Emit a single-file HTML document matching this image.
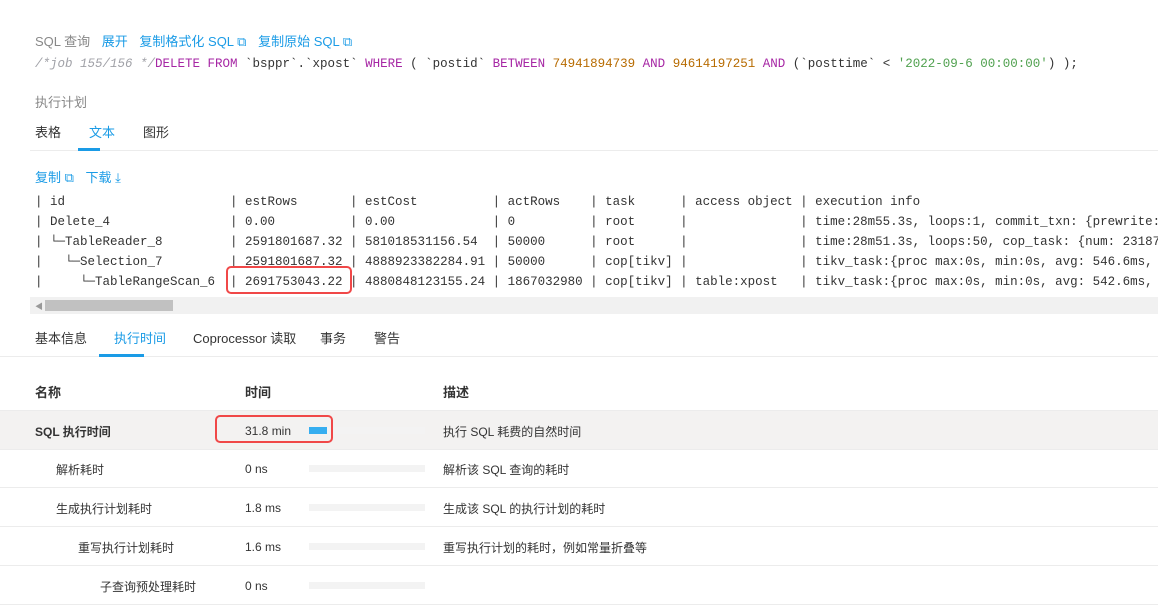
<!DOCTYPE html>
<html><head><meta charset="utf-8"><style>
body{margin:0;width:1158px;height:598px;overflow:hidden;background:#fff;font-family:"Liberation Sans","Noto Sans CJK SC",sans-serif;position:relative;color:#333}
.a{position:absolute;white-space:nowrap}
.blue{color:#1a9be6}
.mono{font-family:"Liberation Mono","DejaVu Sans Mono",monospace;font-size:12.5px}
pre{margin:0;position:absolute;left:35px;top:192px;font-family:"Liberation Mono","DejaVu Sans Mono",monospace;font-size:12.5px;line-height:20px;color:#333}
.kw{color:#a626a4}.num{color:#b76b01}.str{color:#50a14f}.cm{color:#a0a1a7;font-style:italic}
.row{position:absolute;left:0;width:1158px;height:38px;border-bottom:1px solid #ececec;font-size:12px}
.row span{position:absolute;top:12px}
.track{position:absolute;left:309px;top:16px;width:116px;height:7px;background:#f3f3f3}
</style></head><body>
<div class="a" style="left:35px;top:31px;font-size:13px;color:#888">SQL 查询 <span class="blue" style="margin-left:8px">展开</span> <span class="blue" style="margin-left:8px">复制格式化 SQL ⧉</span> <span class="blue" style="margin-left:8px">复制原始 SQL ⧉</span></div>
<div class="a mono" style="left:35px;top:57px"><span class="cm">/*job 155/156 */</span><span class="kw">DELETE FROM</span> `bsppr`.`xpost` <span class="kw">WHERE</span> ( `postid` <span class="kw">BETWEEN</span> <span class="num">74941894739</span> <span class="kw">AND</span> <span class="num">94614197251</span> <span class="kw">AND</span> (`posttime` &lt; <span class="str">'2022-09-6 00:00:00'</span>) );</div>
<div class="a" style="left:35px;top:92px;font-size:13px;color:#888">执行计划</div>
<div class="a" style="left:35px;top:122px;font-size:13px;color:#333">表格</div>
<div class="a blue" style="left:89px;top:122px;font-size:13px">文本</div>
<div class="a" style="left:143px;top:122px;font-size:13px;color:#333">图形</div>
<div class="a" style="left:30px;top:150px;width:1128px;height:1px;background:#ececec"></div>
<div class="a" style="left:78px;top:148px;width:22px;height:3px;background:#1a9be6"></div>
<div class="a blue" style="left:35px;top:167px;font-size:13px">复制 ⧉ <span style="margin-left:8px">下载 ⤓</span></div>
<pre>| id                      | estRows       | estCost          | actRows    | task      | access object | execution info
| Delete_4                | 0.00          | 0.00             | 0          | root      |               | time:28m55.3s, loops:1, commit_txn: {prewrite:
| └─TableReader_8         | 2591801687.32 | 581018531156.54  | 50000      | root      |               | time:28m51.3s, loops:50, cop_task: {num: 23187
|   └─Selection_7         | 2591801687.32 | 4888923382284.91 | 50000      | cop[tikv] |               | tikv_task:{proc max:0s, min:0s, avg: 546.6ms,
|     └─TableRangeScan_6  | 2691753043.22 | 4880848123155.24 | 1867032980 | cop[tikv] | table:xpost   | tikv_task:{proc max:0s, min:0s, avg: 542.6ms,</pre>
<div class="a" style="left:226px;top:266px;width:122px;height:24px;border:2.5px solid #f04848;border-radius:5px"></div>
<div class="a" style="left:30px;top:297px;width:1128px;height:17px;background:#f1f1f1"></div>
<div class="a" style="left:45px;top:300px;width:128px;height:11px;background:#c1c1c1"></div>
<div class="a" style="left:35px;top:301px;font-size:8px;color:#999">◀</div>
<div class="a" style="left:35px;top:328px;font-size:13px;color:#333">基本信息</div>
<div class="a blue" style="left:114px;top:328px;font-size:13px">执行时间</div>
<div class="a" style="left:193px;top:328px;font-size:13px;color:#333">Coprocessor 读取</div>
<div class="a" style="left:320px;top:328px;font-size:13px;color:#333">事务</div>
<div class="a" style="left:374px;top:328px;font-size:13px;color:#333">警告</div>
<div class="a" style="left:0;top:356px;width:1158px;height:1px;background:#ececec"></div>
<div class="a" style="left:99px;top:354px;width:45px;height:3px;background:#1a9be6"></div>
<div class="a" style="left:35px;top:382px;font-size:13px;font-weight:bold;color:#333">名称</div>
<div class="a" style="left:245px;top:382px;font-size:13px;font-weight:bold;color:#333">时间</div>
<div class="a" style="left:443px;top:382px;font-size:13px;font-weight:bold;color:#333">描述</div>
<div class="row" style="top:410px;background:#f3f2f1;border-top:1px solid #ececec"><span style="left:35px;font-weight:bold">SQL 执行时间</span><span style="left:245px;top:13px">31.8 min</span><div class="track"></div><div class="track" style="width:18px;background:#36aef0"></div><span style="left:443px">执行 SQL 耗费的自然时间</span></div>
<div class="a" style="left:215px;top:415px;width:114px;height:24px;border:2.5px solid #f04848;border-radius:5px"></div>
<div class="row" style="top:449px"><span style="left:56px">解析耗时</span><span style="left:245px;top:13px">0 ns</span><div class="track"></div><span style="left:443px">解析该 SQL 查询的耗时</span></div>
<div class="row" style="top:488px"><span style="left:56px">生成执行计划耗时</span><span style="left:245px;top:13px">1.8 ms</span><div class="track"></div><span style="left:443px">生成该 SQL 的执行计划的耗时</span></div>
<div class="row" style="top:527px"><span style="left:78px">重写执行计划耗时</span><span style="left:245px;top:13px">1.6 ms</span><div class="track"></div><span style="left:443px">重写执行计划的耗时，例如常量折叠等</span></div>
<div class="row" style="top:566px"><span style="left:100px">子查询预处理耗时</span><span style="left:245px;top:13px">0 ns</span><div class="track"></div></div>
</body></html>
